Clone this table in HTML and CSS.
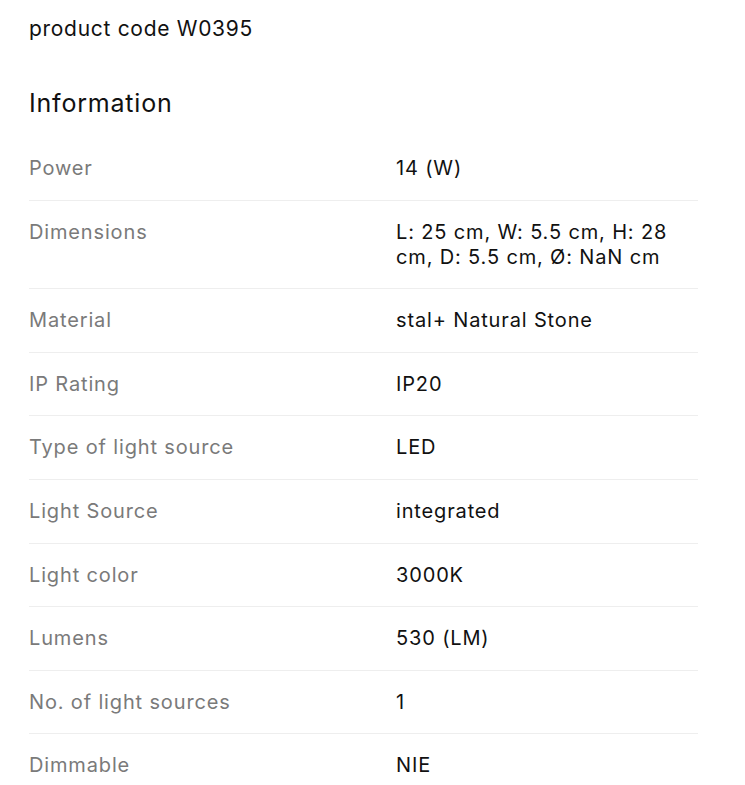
FILE: index.html
```html
<!DOCTYPE html>
<html>
<head>
<meta charset="utf-8">
<link rel="stylesheet" href="styles.css">
</head>
<body>
<div class="page">
  <p class="code">product code W0395</p>
  <h2 class="title">Information</h2>
  <div class="table">
    <div class="row"><div class="label">Power</div><div class="value">14 (W)</div></div>
    <div class="row"><div class="label">Dimensions</div><div class="value">L: 25 cm, W: 5.5 cm, H: 28 cm, D: 5.5 cm, Ø: NaN cm</div></div>
    <div class="row"><div class="label">Material</div><div class="value">stal+ Natural Stone</div></div>
    <div class="row"><div class="label">IP Rating</div><div class="value">IP20</div></div>
    <div class="row"><div class="label">Type of light source</div><div class="value">LED</div></div>
    <div class="row"><div class="label">Light Source</div><div class="value">integrated</div></div>
    <div class="row"><div class="label">Light color</div><div class="value">3000K</div></div>
    <div class="row"><div class="label">Lumens</div><div class="value">530 (LM)</div></div>
    <div class="row"><div class="label">No. of light sources</div><div class="value">1</div></div>
    <div class="row last"><div class="label">Dimmable</div><div class="value">NIE</div></div>
  </div>
</div>
</body>
</html>
```
FILE: styles.css
```css
html, body {
  margin: 0;
  padding: 0;
  background: #fff;
}
body {
  font-family: Inter, "Noto Sans", sans-serif;
  color: #111;
}
.page {
  padding: 15px 47px 0 29px;
}
.code {
  margin: 0;
  font-size: 21px;
  line-height: 28px;
  letter-spacing: 0.7px;
  color: #111;
}
.title {
  margin: 44px 0 0;
  font-size: 25px;
  font-weight: 400;
  line-height: 32px;
  letter-spacing: 0.8px;
  color: #111;
}
.table {
  margin-top: 18px;
}
.row {
  display: grid;
  grid-template-columns: 367px 1fr;
  padding: 19px 0 18.6px;
  border-bottom: 1px solid #eeeeee;
  font-size: 20px;
  line-height: 25px;
  letter-spacing: 0.85px;
}
.row.last {
  border-bottom: none;
}
.label {
  color: #7a7a7a;
}
.value {
  color: #111;
  padding-right: 20px;
}
```
